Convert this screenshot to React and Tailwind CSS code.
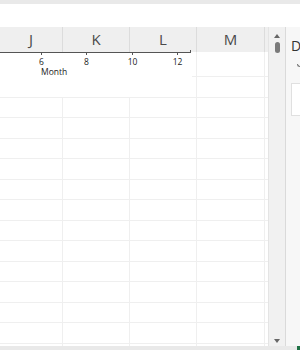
import React from 'react';

const COLS = [
  { label: 'J', w: 63 },
  { label: 'K', w: 67 },
  { label: 'L', w: 67 },
  { label: 'M', w: 68 },
  { label: '', w: 5 },
];

const ROWS = Array.from({ length: 14 });

const TICKS = [
  { x: 41, t: '6' },
  { x: 86, t: '8' },
  { x: 132, t: '10' },
  { x: 177, t: '12' },
];

export default function App() {
  return (
    <div className="w-[300px] h-[350px] overflow-hidden bg-white flex flex-col" style={{ fontFamily: '"Open Sans", "DejaVu Sans", sans-serif' }}>
      {/* top strip */}
      <div className="h-[4px] bg-[#e9e9e9] shrink-0" />
      <div className="h-[23px] bg-white shrink-0" />

      <div className="flex flex-1 min-h-0">
        {/* grid */}
        <div className="relative w-[268px] shrink-0 overflow-hidden">
          <div className="flex h-[25px] bg-[#efefef]">
            {COLS.map((c, i) => (
              <div key={i} className="shrink-0 flex items-center justify-center border-r border-[#dcdcdc] text-[15px] text-[#4a4a4a]" style={{ width: c.w }}>
                {c.label}
              </div>
            ))}
          </div>
          <div className="flex h-[25px] border-b border-[#efefef]">
            {COLS.map((c, i) => (
              <div key={i} className="shrink-0 border-r border-[#efefef]" style={{ width: c.w }} />
            ))}
          </div>
          {ROWS.map((_, r) => (
            <div key={r} className="flex h-[20.5px] border-b border-[#efefef]">
              {COLS.map((c, i) => (
                <div key={i} className="shrink-0 border-r border-[#efefef]" style={{ width: c.w }} />
              ))}
            </div>
          ))}

          {/* chart overlay */}
          <div className="absolute left-0 top-[25px] w-[192px] h-[45px] bg-white">
            <div className="absolute left-0 top-0 w-[191px] h-px bg-[#555]" />
            <div className="absolute left-[190px] top-[-2px] w-px h-[3px] bg-[#555]" />
            {TICKS.map(tk => (
              <React.Fragment key={tk.t}>
                <div className="absolute top-0 w-px h-[3px] bg-[#555]" style={{ left: tk.x }} />
                <div className="absolute top-[5px] w-[20px] -ml-[10px] text-center text-[8.5px] leading-[10px] text-[#222]" style={{ left: tk.x + 0.5 }}>
                  {tk.t}
                </div>
              </React.Fragment>
            ))}
            <div className="absolute left-[41px] top-[15px] text-[8.5px] leading-[10px] text-[#222]">Month</div>
          </div>
        </div>

        {/* vertical scrollbar */}
        <div className="w-[17px] shrink-0 bg-[#f1f1f1] border-l border-[#e4e4e4] flex flex-col items-center pt-[7px] pb-[1px]">
          <div className="w-0 h-0 border-l-[3px] border-r-[3px] border-b-[4px] border-l-transparent border-r-transparent border-b-[#666]" />
          <div className="mt-[4px] w-[5px] h-[11px] rounded-full bg-[#7a7a7a]" />
          <div className="flex-1" />
          <div className="w-0 h-0 border-l-[3px] border-r-[3px] border-t-[4px] border-l-transparent border-r-transparent border-t-[#666] mb-[2px]" />
        </div>

        {/* side panel */}
        <div className="flex-1 bg-[#f7f7f7] border-l border-[#dadada] flex flex-col pl-[5px] pt-[11px]">
          <div className="text-[14px] leading-[16px] text-[#333]">D</div>
          <div className="ml-[6px] mt-[10px] w-[4px] h-[3px] border-b border-l border-[#777] rounded-bl-full" />
          <div className="mt-[16px] h-[33px] bg-white border border-[#e0e0e0]" />
        </div>
      </div>

      {/* bottom strip */}
      <div className="h-[4px] bg-[#e9e9e9] shrink-0 flex justify-end">
        <div className="w-[3px] h-full bg-[#1e7145]" />
      </div>
    </div>
  );
}
